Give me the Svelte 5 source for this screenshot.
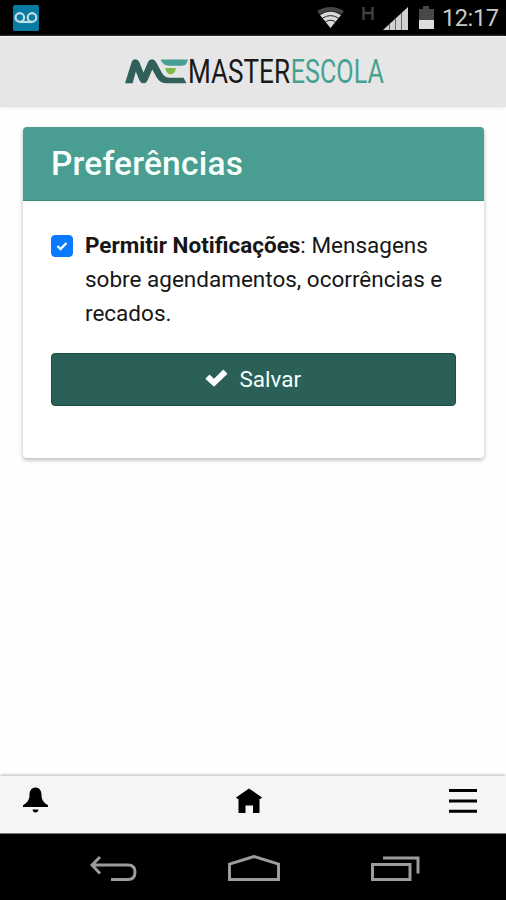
<script>
  let allow = $state(true);
</script>

<div class="screen">
  <div class="status">
    <svg class="voicemail" width="26" height="26" viewBox="0 0 26 26">
      <rect width="26" height="26" rx="2" fill="#087ba3" />
      <g fill="none" stroke="#c3dde7" stroke-width="2.200">
        <circle cx="6.800" cy="12.500" r="4.300" /><circle cx="19" cy="12.500" r="4.300" />
        <path d="M6.800 17H19" />
      </g>
    </svg>
    <svg class="signals" width="117" height="36" viewBox="0 0 117 36">
      <path d="M0 11Q13.500 3 27 11L13.500 28Z" fill="#464646" />
      <path d="M3 15Q13.500 8 24 15L13.500 28Z" fill="#d8d8d8" />
      <g fill="none" stroke="#222" stroke-width="1"><path d="M3 14.500Q13.500 7.500 24 14.500M5.500 18.200Q13.500 13 21.500 18.200M8.300 22Q13.500 18.500 18.700 22" /></g>
      <g fill="none" stroke="#414141" stroke-width="2.300"><path d="M46.500 7V20M55.500 7V20M46.500 13H55.500" /></g>
      <path d="M66 30L91 7V30Z" fill="#d1d1d1" />
      <path d="M72.500 24V30M78.500 18.500V30M84.500 13V30" stroke="#666" stroke-width="1" />
      <path d="M102 9H106V6H112V9H117V20H102Z" fill="#484848" />
      <path d="M102 20H117V29H102Z" fill="#dedede" />
    </svg>
    <span class="clock">12:17</span>
  </div>

  <header>
    <svg width="262" height="50" viewBox="0 0 262 50">
      <path d="M1 28.300L7.500 7.500Q8.500 4.300 11.500 4.300Q14 4.300 15.300 7L19.500 17.500L24 7Q25.300 4.300 28 4.300Q30.500 4.300 32 7L38 18Q40.500 22.700 46 22.700H59.500L62.500 28.300H43Q36 28.300 33 23L28.300 14.500L23.500 25.500Q22.300 28.300 19.500 28.300Q16.700 28.300 15.500 25.500L11.800 16.500L8.700 28.300Z" fill="#315f5a" />
      <path d="M36.500 4.500H63.800Q63 10.700 58 10.700H45Q39 10.700 36.500 4.500Z" fill="#469f96" />
      <path d="M41 13H52Q51 19 46.500 19.500Q43 19.500 41 13Z" fill="#7dbc49" />
      <text x="64" y="28.300" textLength="102" lengthAdjust="spacingAndGlyphs" fill="#191919">MASTER</text>
      <text x="166.800" y="28.300" textLength="93" lengthAdjust="spacingAndGlyphs" fill="#46a191">ESCOLA</text>
    </svg>
  </header>

  <main>
    <section class="card">
      <h1>Preferências</h1>
      <div class="body">
        <label>
          <input type="checkbox" bind:checked={allow} />
          <span class="box" class:on={allow}>
            {#if allow}
              <svg width="12" height="10" viewBox="0 0 12 10"><path d="M1.500 5L4.500 8L10.500 2" fill="none" stroke="#fff" stroke-width="2.300" /></svg>
            {/if}
          </span>
          <span class="copy"><b>Permitir Notificações</b>: Mensagens<br />sobre agendamentos, ocorrências e<br />recados.</span>
        </label>
        <button>
          <svg width="23" height="18" viewBox="0 0 23 18"><path d="M0.800 9.200L4 6Q4.500 5.500 5 6L9 9.800L17.800 1Q18.300 .5 18.800 1L22 4.200Q22.500 4.700 22 5.200L9.500 17.300Q9 17.800 8.500 17.300L0.800 10.200Q.3 9.700 .8 9.200Z" fill="#fff" /></svg>
          <span>Salvar</span>
        </button>
      </div>
    </section>
  </main>

  <nav>
    <svg width="26" height="27" viewBox="0 0 26 27">
      <path d="M12.500 0.500C8 0.500 6.500 4.500 6.500 8C6.500 13 4 16 0 18.200V20H25V18.200C21 16 18.500 13 18.500 8C18.500 4.500 17 0.500 12.500 0.500ZM9.500 22.500H15.500Q15 25.500 12.500 25.500Q10 25.500 9.500 22.500Z" />
    </svg>
    <svg width="26" height="27" viewBox="0 0 26 27">
      <path d="M13 1.500L26 10.500L24.500 12L23.500 11.500V26H17V18.500H9.500V26H2.500V11.500L1.500 12L0 10.500Z" />
    </svg>
    <svg width="28" height="27" viewBox="0 0 28 27">
      <path d="M0 3.400H28M0 13.900H28M0 24.300H28" stroke="#000" stroke-width="3" />
    </svg>
  </nav>

  <footer>
    <svg width="47" height="28" viewBox="0 0 47 28"><path d="M10 2L2 10L10 18.500M2 10H38Q45 10 45 17Q45 24.500 38 24.500H21" /></svg>
    <svg width="53" height="28" viewBox="0 0 53 28"><path d="M1.500 24.500V9L26 1.500L50.500 9V24.500Z" /></svg>
    <svg width="50" height="28" viewBox="0 0 50 28"><path d="M1.500 9.500H39V24.500H1.500ZM12 3H47V18.500" /></svg>
  </footer>
</div>

<style>
  :global(body) { margin: 0; }
  .screen {
    width: 506px; height: 900px; display: flex; flex-direction: column;
    background: #fefefe; font-family: Roboto, "Liberation Sans", sans-serif; color: #161616;
    overflow: hidden;
  }
  .status {
    height: 36px; flex: none; box-sizing: border-box; background: #000;
    display: flex; align-items: center; padding: 0 9px 0 13px;
  }
  .signals { margin-left: auto; margin-right: 8px; }
  .clock { color: #c9c9c9; font-size: 23.500px; line-height: 36px; width: 55px; white-space: nowrap; letter-spacing: -0.400px; }
  header {
    height: 71px; flex: none; box-sizing: border-box; background: #e6e6e6; border-top: 1px solid #f6f6f6;
    padding: 18px 0 0 124px; box-shadow: 0 1px 3px #ececec;
  }
  header svg { display: block; overflow: visible; }
  header text { font: 400 33px Roboto, sans-serif; }
  main { flex: 1; padding: 20px 22px 0 23px; }
  .card {
    height: 331px; border-radius: 4px; background: #fff; overflow: hidden;
    box-shadow: 0 2px 4px rgba(0, 0, 0, .28);
  }
  h1 {
    margin: 0; height: 74px; box-sizing: border-box; padding: 0 28px; background: #499e91; color: #f7fffd;
    font-size: 33.500px; font-weight: 500; line-height: 73px; letter-spacing: .2px; border-bottom: 1px solid #39927f;
  }
  .body { padding: 28px 28.500px 0 28px; }
  label { display: flex; }
  input { appearance: none; width: 0; height: 0; margin: 0; }
  .box {
    flex: none; width: 22px; height: 22px; margin: 6px 12px 0 0; border-radius: 4px; box-sizing: border-box;
    border: 1px solid #aaa; display: flex; align-items: center; justify-content: center;
  }
  .on { background: #097aff; border-color: #097aff; }
  .copy { font-size: 22.500px; line-height: 33.800px; white-space: nowrap; }
  b { font-weight: 700; }
  button {
    width: 100%; height: 53px; margin-top: 23px; border: 1px solid #17503f; border-radius: 4px; background: #2b6058;
    color: #f3fffc; font: 400 22.500px Roboto, sans-serif; display: flex; align-items: center; justify-content: center;
    gap: 11px; padding: 0 0 1px;
  }
  button svg { margin-top: -2px; }
  nav {
    height: 57px; flex: none; box-sizing: border-box; background: #f5f5f5; display: flex; justify-content: space-between;
    padding: 11px 29px 0 23px; box-shadow: 0 -1px 3px rgba(0, 0, 0, .28);
  }
  footer {
    height: 67px; flex: none; box-sizing: border-box; background: #000; border-top: 1px solid #777;
    display: flex; justify-content: space-between; padding: 21px 85px 0 90px;
  }
  footer path { fill: none; stroke: #9c9c9c; stroke-width: 3; }
</style>
